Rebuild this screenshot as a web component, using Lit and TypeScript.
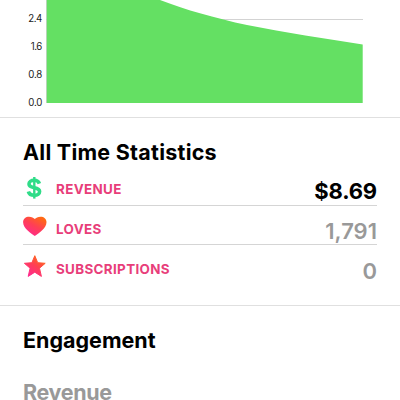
import { LitElement, html, css, svg } from "lit";
import { customElement, property } from "lit/decorators.js";

type IconName = "dollar" | "heart" | "star";

@customElement("stat-icon")
class StatIcon extends LitElement {
  @property() name: IconName = "dollar";

  static styles = css`
    :host { display: block; width: 24px; height: 26px; }
    svg { display: block; overflow: visible; }
    .dollar { fill: none; stroke: #2fdc88; stroke-width: 3.6px; }
    .bar { stroke-width: 2.4px; }
  `;

  render() {
    const shapes = {
      dollar: svg`<path class="dollar" d="M16.4 8.7 C15.6 6.4 13.8 5.3 11.2 5.3 C8 5.3 6 6.9 6 9 C6 11.4 8.3 12.1 11.2 12.7 C14.4 13.3 16.6 14.1 16.6 16.5 C16.6 18.9 14.4 20.3 11.4 20.3 C8.2 20.3 6 19 5.4 16.5"/><path class="dollar bar" d="M11.3 2V23.6"/>`,
      heart: svg`<path fill="url(#warm)" d="M11.8 21 C8.5 18.8 0.1 13.4 0.1 7.3 C0.1 3.7 2.8 1.7 6 1.7 C8.7 1.7 10.6 2.8 11.8 4 C13 2.8 14.9 1.7 17.6 1.7 C20.8 1.7 23.5 3.7 23.5 7.3 C23.5 13.4 15.1 18.8 11.8 21Z"/>`,
      star: svg`<path fill="url(#warm)" stroke="url(#warm)" stroke-width="1" stroke-linejoin="round" d="M11.8 0.7 L14.7 7.7 L22.2 8.3 L16.5 13.2 L18.4 21.4 L11.8 17.2 L5.2 21.4 L7.1 13.2 L1.4 8.3 L8.9 7.7Z"/>`,
    };
    return html`<svg width="24" height="26" viewBox="0 0 24 26">
      <defs>
        <linearGradient id="warm" x1="0.2" y1="0.9" x2="0.8" y2="0.05">
          <stop offset="0" stop-color="#ff2a8c" />
          <stop offset="0.5" stop-color="#ff3f55" />
          <stop offset="1" stop-color="#ff6a12" />
        </linearGradient>
      </defs>
      ${shapes[this.name]}
    </svg>`;
  }
}

@customElement("area-chart")
class AreaChart extends LitElement {
  static styles = css`
    :host { display: block; height: 117px; }
    svg { display: block; }
    text { font: 400 9.7px Inter, sans-serif; fill: #222; text-anchor: end; }
  `;

  render() {
    const ticks: [string, number][] = [["2.4", 22], ["1.6", 50], ["0.8", 78], ["0.0", 106]];
    return html`<svg width="400" height="117">
      <path d="M46 19.5H363" stroke="#d3d3d3" />
      <path fill="#64e063" d="M46.5 0H160C174 5.2 187 9.8 200 13.2C216 17.8 231 21.6 247 25C286 33 325 38.5 362.7 44.4V103H46.5Z" />
      <path d="M46.5 0V103" stroke="#b9c9b9" stroke-width="0.7" />
      ${ticks.map(([label, y]) => svg`<text x="42.3" y=${y} textLength=${label === "1.6" ? 11.5 : 14}>${label}</text>`)}
    </svg>`;
  }
}

@customElement("app-root")
class AppRoot extends LitElement {
  static styles = css`
    :host { display: block; height: 400px; overflow: hidden; background: #fff; font-family: Inter, sans-serif; color: #000; }
    .stats { box-sizing: border-box; height: 188px; border-top: 1px solid #e0e0e0; padding: 20px 23px 0; }
    h2 { margin: 0; font-weight: 700; font-size: 21.5px; line-height: 28px; white-space: nowrap; }
    .row { box-sizing: border-box; height: 39px; display: flex; border-bottom: 1px solid #d5d5d5; padding-top: 9px; }
    .row.first { height: 40px; padding-top: 9px; }
    .row.last { border: 0; padding-top: 10px; }
    .name { flex: 1; padding-left: 9px; font-size: 13.4px; font-weight: 700; line-height: 29px; letter-spacing: 0.35px; color: #e83e7a; }
    .value { font-size: 22px; font-weight: 600; line-height: 32px; color: #999; }
    .row.first .value { color: #000; font-weight: 650; letter-spacing: -0.15px; }
    .engagement { border-top: 1px solid #e0e0e0; padding: 20px 23px 0; }
    .engagement .sub { margin-top: 24px; color: #999; font-weight: 700; letter-spacing: -0.35px; }
    .title { font-weight: 650; letter-spacing: 0.25px; }
  `;

  render() {
    const rows: { icon: IconName; name: string; value: string; cls: string }[] = [
      { icon: "dollar", name: "REVENUE", value: "$8.69", cls: "first" },
      { icon: "heart", name: "LOVES", value: "1,791", cls: "" },
      { icon: "star", name: "SUBSCRIPTIONS", value: "0", cls: "last" },
    ];
    return html`
      <area-chart></area-chart>
      <section class="stats">
        <h2 class="title">All Time Statistics</h2>
        ${rows.map((r) => html`<div class="row ${r.cls}">
          <stat-icon .name=${r.icon}></stat-icon>
          <span class="name">${r.name}</span>
          <span class="value">${r.value}</span>
        </div>`)}
      </section>
      <section class="engagement">
        <h2>Engagement</h2>
        <h2 class="sub">Revenue</h2>
      </section>
    `;
  }
}
